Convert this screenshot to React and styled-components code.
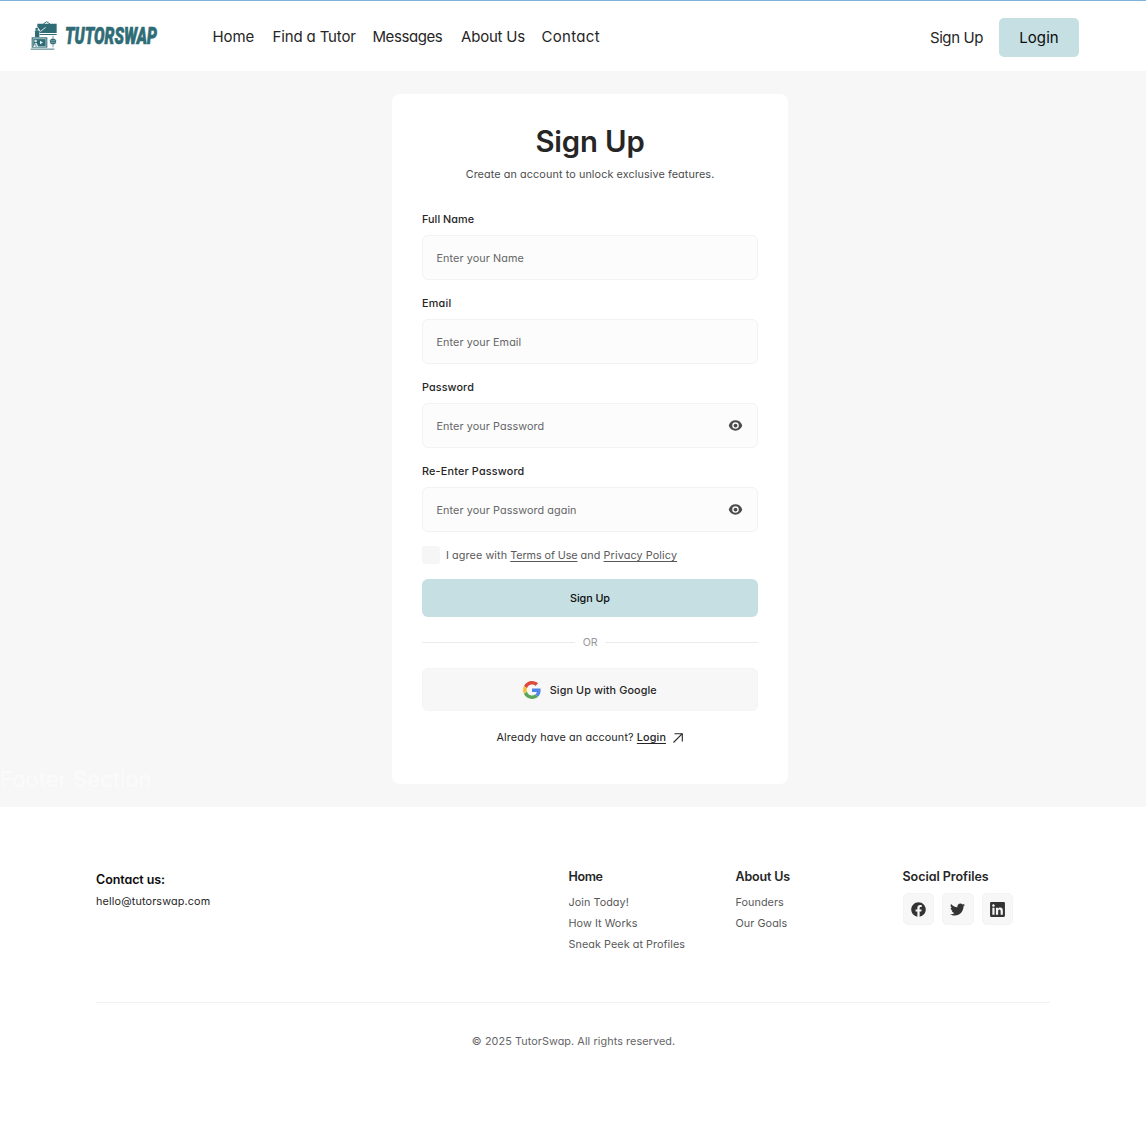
import React from 'react';
import styled, { createGlobalStyle } from 'styled-components';
import { HiEye } from 'react-icons/hi2';
import { FaFacebook, FaTwitter, FaLinkedin } from 'react-icons/fa';

const GlobalStyle = createGlobalStyle`
  *, *::before, *::after { box-sizing: border-box; }
  body {
    margin: 0;
    background: #fff;
    color: #262626;
    font-family: Inter, "Liberation Sans", sans-serif;
    font-feature-settings: "cv11";
    font-size: 10.8px;
    line-height: 18px;
    letter-spacing: 0.15px;
  }
  h1, h2, p, ul { margin: 0; padding: 0; }
  ul { list-style: none; }
  a { color: inherit; text-decoration: none; }
  button, input { font: inherit; font-feature-settings: inherit; }
`;

const Page = styled.div`
  height: 1126px;
  overflow: hidden;
  display: flex;
  flex-direction: column;
`;

/* Header */
const Header = styled.header`
  flex: none;
  height: 71px;
  display: flex;
  align-items: flex-start;
  border-top: 1px solid #7fb2dd;
  background: #fff;
  font-size: 15px;
  line-height: 20px;
`;
const Brand = styled.a`
  flex: none;
  width: 182.5px;
  margin: 18px 0 0 30px;
  svg { display: block; overflow: visible; }
`;
const NavGrid = styled.nav`
  display: grid;
  grid-template-columns: 60px 100px 88.5px 80.5px auto;
  margin-top: 25.5px;
  white-space: nowrap;
`;
const NavLink = styled.a`
  letter-spacing: ${(p) => p.$track}px;
`;
const Actions = styled.div`
  display: flex;
  align-items: center;
  gap: 16px;
  margin: 17px 67px 0 auto;
`;
const LoginButton = styled.a`
  width: 80px;
  height: 39px;
  display: flex;
  align-items: center;
  justify-content: center;
  border-radius: 5px;
  background: #c5dfe3;
  color: #0c0c0c;
  letter-spacing: 0.1px;
`;

/* Main */
const Main = styled.main`
  position: relative;
  flex: none;
  height: 736px;
  padding-top: 23px;
  padding-left: 34px;
  display: flex;
  justify-content: center;
  align-items: flex-start;
  background: #f7f7f7;
`;
const Ghost = styled.span`
  position: absolute;
  left: 0;
  bottom: 14px;
  font-size: 22px;
  line-height: 28px;
  letter-spacing: 0.05px;
  color: #fbfbfb;
`;
const Card = styled.section`
  width: 396px;
  height: 690px;
  padding: 30px;
  border-radius: 8px;
  background: #fff;
`;
const Title = styled.h1`
  font-size: 29.3px;
  line-height: 35px;
  font-weight: 600;
  letter-spacing: -0.15px;
  text-align: center;
`;
const Subtitle = styled.p`
  margin-top: 7px;
  text-align: center;
  letter-spacing: 0.1px;
  color: #4c4c4d;
`;
const Form = styled.form`
  margin-top: 27px;
  display: flex;
  flex-direction: column;
`;
const Field = styled.label`
  display: flex;
  flex-direction: column;
  gap: 6px;
  margin-bottom: 15px;
`;
const FieldLabel = styled.span`
  font-weight: 500;
  letter-spacing: ${(p) => p.$track}px;
`;
const InputBox = styled.span`
  height: 45px;
  padding: 0 14px 0 13.5px;
  display: flex;
  align-items: center;
  border: 1px solid #f2f2f3;
  border-radius: 6px;
  background: #fcfcfc;
  color: #4c4c4d;
`;
const Input = styled.input`
  flex: 1;
  min-width: 0;
  height: 21px;
  padding: 2px 0 0;
  border: 0;
  outline: 0;
  background: transparent;
  letter-spacing: 0.09px;
  &::placeholder { color: #656567; opacity: 1; }
`;
const Agree = styled.div`
  display: flex;
  align-items: center;
  height: 18px;
  margin-top: -1px;
  color: #59595a;
`;
const AgreeText = styled.span`
  padding-top: 2px;
  white-space: pre;
  letter-spacing: 0.09px;
`;
const Checkbox = styled.span`
  width: 18px;
  height: 18px;
  margin-right: 6px;
  border-radius: 3px;
  background: #f6f6f7;
`;
const TextLink = styled.a`
  text-decoration: underline;
  text-underline-offset: 1.5px;
  text-decoration-thickness: 1px;
  text-decoration-skip-ink: none;
  font-weight: ${(p) => (p.$strong ? 500 : 400)};
  letter-spacing: ${(p) => p.$track ?? 0.12}px;
`;
const Button = styled.button`
  display: flex;
  align-items: center;
  justify-content: center;
  gap: 8.5px;
  width: 100%;
  height: ${(p) => (p.$primary ? 38 : 43)}px;
  margin-top: ${(p) => (p.$primary ? 15 : 16)}px;
  padding: 0;
  border: ${(p) => (p.$primary ? '0' : '1px solid #f4f4f5')};
  border-radius: 6px;
  background: ${(p) => (p.$primary ? '#c5dfe3' : '#f7f7f7')};
  color: ${(p) => (p.$primary ? '#0c0c0c' : '#262626')};
  font-weight: 500;
  letter-spacing: ${(p) => (p.$primary ? -0.08 : 0.11)}px;
`;
const ButtonText = styled.span`
  padding-top: 2px;
`;
const Divider = styled.div`
  display: flex;
  align-items: center;
  gap: 7.5px;
  height: 19px;
  margin-top: 16px;
  font-size: 10.6px;
  letter-spacing: -0.2px;
  color: #98989a;
  &::before, &::after {
    content: "";
    flex: 1;
    height: 1px;
    margin-bottom: 1px;
    background: #ebebed;
  }
`;
const DividerText = styled.span`
  padding-top: 1px;
`;
const Existing = styled.p`
  display: flex;
  align-items: center;
  justify-content: center;
  margin-top: 18px;
  white-space: pre;
  letter-spacing: 0.13px;
  svg { margin: 0 1px 1px 6.5px; }
`;

/* Footer */
const Footer = styled.footer`
  flex: 1;
  margin: 0 96px;
  padding-top: 60px;
`;
const FooterTop = styled.div`
  display: grid;
  grid-template-columns: 472.5px 167px 167px auto;
  height: 135px;
`;
const Column = styled.div`
  padding-top: ${(p) => p.$offset || 1}px;
`;
const Heading = styled.h2`
  font-size: 12.5px;
  line-height: 18px;
  font-weight: 600;
  color: ${(p) => (p.$dark ? '#0c0c0c' : '#262626')};
  letter-spacing: ${(p) => p.$track}px;
`;
const Mail = styled.a`
  display: block;
  margin-top: 4px;
`;
const Links = styled.ul`
  margin-top: 6px;
  line-height: 21px;
  letter-spacing: 0.06px;
  color: #59595a;
`;
const Socials = styled.div`
  display: flex;
  gap: 8px;
  margin-top: 7px;
`;
const Social = styled.a`
  width: 31.5px;
  height: 32px;
  display: flex;
  align-items: center;
  justify-content: center;
  border: 1px solid #f3f3f4;
  border-radius: 5px;
  background: #f7f7f7;
  color: #333;
`;
const Copyright = styled.p`
  padding-top: 30px;
  padding-left: 1px;
  border-top: 1px solid #f1f1f3;
  text-align: center;
  letter-spacing: 0.09px;
  color: #656567;
`;

function Logo() {
  return (
    <svg width="134" height="34" viewBox="0 0 134 34" role="img" aria-label="TutorSwap">
      <g transform="translate(-30 -19) scale(.33333)" fill="#2f6c76">
        <path d="M130 72l10-7 10 7" fill="none" stroke="#2f6c76" strokeWidth="3" />
        <path d="M112 71h58v28h-51v-10l-7-6z" />
        <path d="M119 102h51v3h-51z" />
        <circle cx="111" cy="87" r="5.500" fill="#fff" />
        <circle cx="110" cy="87" r="4" />
        <path d="M105 94q0-3 4-3h6l3 3v17h-13z" />
        <path d="M115 88l7 6 15-12" fill="none" stroke="#fff" strokeWidth="2.500" />
        <path d="M95 112h47v31H95z" />
        <path d="M99 116h39v24H99z" fill="none" stroke="#d5e3e5" strokeWidth="2" />
        <circle cx="107" cy="123" r="4" fill="#d5e3e5" />
        <path d="M101 141l4-12h5l5 12zM120 122v11l9-5.500z" fill="#e6eff0" />
        <path d="M106 131l3 10" stroke="#2f6c76" strokeWidth="2" />
        <path d="M92 145.500h71v4H92z" opacity=".7" />
        <circle cx="159" cy="124.500" r="9" />
        <path d="M149 121.500h20M149 128h20M159 107v8M159 134v8" fill="none" stroke="#2f6c76" strokeWidth="2" />
        <path d="M152 122h14M152 127.500h14" stroke="#b8d0d3" strokeWidth="1.500" />
      </g>
      <text
        x="35"
        y="24.500"
        fill="#2f6c76"
        stroke="#2f6c76"
        strokeWidth=".7"
        fontFamily="Roboto, sans-serif"
        fontSize="24.500"
        fontWeight="900"
        fontStyle="italic"
        letterSpacing="0"
        textLength="92"
        lengthAdjust="spacingAndGlyphs"
      >
        TUTORSWAP
      </text>
    </svg>
  );
}

function GoogleIcon() {
  return (
    <svg width="18" height="18" viewBox="0 0 48 48" aria-hidden="true">
      <path fill="#dd4b3e" d="M24 9.500c3.540 0 6.710 1.220 9.210 3.600l6.850-6.850C35.900 2.380 30.470 0 24 0 14.620 0 6.510 5.380 2.560 13.220l7.980 6.190C12.430 13.720 17.740 9.500 24 9.500z" />
      <path fill="#4f86ec" d="M46.980 24.550c0-1.570-.15-3.090-.38-4.550H24v9.020h12.940c-.58 2.960-2.260 5.480-4.780 7.180l7.730 6c4.510-4.180 7.090-10.360 7.090-17.650z" />
      <path fill="#f3c13a" d="M10.530 28.590c-.48-1.450-.76-2.990-.76-4.590s.27-3.140.76-4.590l-7.980-6.190C.92 16.460 0 20.120 0 24c0 3.880.92 7.540 2.560 10.780l7.970-6.190z" />
      <path fill="#58a55c" d="M24 48c6.480 0 11.930-2.130 15.890-5.810l-7.730-6c-2.150 1.450-4.920 2.300-8.160 2.300-6.260 0-11.570-4.220-13.470-9.910l-7.980 6.190C6.510 42.620 14.620 48 24 48z" />
    </svg>
  );
}

function ArrowIcon() {
  return (
    <svg width="10" height="10" viewBox="0 0 10 10" fill="none" stroke="#262626" strokeWidth="1.100" aria-hidden="true">
      <path d="M.5 9.500L9.300.7M1.500.7h7.800v7.800" />
    </svg>
  );
}

const nav = [
  ['Home', -0.1],
  ['Find a Tutor', -0.14],
  ['Messages', -0.43],
  ['About Us', -0.2],
  ['Contact', 0.3],
];

const fields = [
  { label: 'Full Name', hint: 'Enter your Name', track: 0.06 },
  { label: 'Email', hint: 'Enter your Email', track: 0.25 },
  { label: 'Password', hint: 'Enter your Password', track: 0.1, secret: true },
  { label: 'Re-Enter Password', hint: 'Enter your Password again', track: 0.19, secret: true },
];

const columns = [
  { title: 'Home', track: -0.4, links: ['Join Today!', 'How It Works', 'Sneak Peek at Profiles'] },
  { title: 'About Us', track: -0.15, links: ['Founders', 'Our Goals'] },
];

export default function App() {
  return (
    <>
      <GlobalStyle />
      <Page>
        <Header>
          <Brand href="#"><Logo /></Brand>
          <NavGrid>
            {nav.map(([name, track]) => (
              <NavLink href="#" key={name} $track={track}>{name}</NavLink>
            ))}
          </NavGrid>
          <Actions>
            <NavLink href="#" $track={-0.4}>Sign Up</NavLink>
            <LoginButton href="#">Login</LoginButton>
          </Actions>
        </Header>

        <Main>
          <Card>
            <Title>Sign Up</Title>
            <Subtitle>Create an account to unlock exclusive features.</Subtitle>
            <Form>
              {fields.map((f) => (
                <Field key={f.label}>
                  <FieldLabel $track={f.track}>{f.label}</FieldLabel>
                  <InputBox>
                    <Input type={f.secret ? 'password' : 'text'} placeholder={f.hint} />
                    {f.secret && <HiEye size={15} />}
                  </InputBox>
                </Field>
              ))}
              <Agree>
                <Checkbox />
                <AgreeText>
                  {'I agree with '}
                  <TextLink href="#" $track={-0.1}>Terms of Use</TextLink>
                  {' and '}
                  <TextLink href="#">Privacy Policy</TextLink>
                </AgreeText>
              </Agree>
              <Button type="button" $primary><ButtonText>Sign Up</ButtonText></Button>
              <Divider><DividerText>OR</DividerText></Divider>
              <Button type="button"><GoogleIcon /><ButtonText>Sign Up with Google</ButtonText></Button>
            </Form>
            <Existing>
              <span>Already have an account? </span>
              <TextLink href="#" $strong>Login</TextLink>
              <ArrowIcon />
            </Existing>
          </Card>
          <Ghost>Footer Section</Ghost>
        </Main>

        <Footer>
          <FooterTop>
            <Column $offset={4}>
              <Heading $dark $track={-0.08}>Contact us:</Heading>
              <Mail href="#">hello@tutorswap.com</Mail>
            </Column>
            {columns.map((c) => (
              <Column key={c.title}>
                <Heading $track={c.track}>{c.title}</Heading>
                <Links>
                  {c.links.map((l) => <li key={l}><a href="#">{l}</a></li>)}
                </Links>
              </Column>
            ))}
            <Column>
              <Heading $track={-0.03}>Social Profiles</Heading>
              <Socials>
                <Social href="#" aria-label="Facebook"><FaFacebook size={15} /></Social>
                <Social href="#" aria-label="Twitter"><FaTwitter size={15} /></Social>
                <Social href="#" aria-label="LinkedIn"><FaLinkedin size={17} /></Social>
              </Socials>
            </Column>
          </FooterTop>
          <Copyright>© 2025 TutorSwap. All rights reserved.</Copyright>
        </Footer>
      </Page>
    </>
  );
}
